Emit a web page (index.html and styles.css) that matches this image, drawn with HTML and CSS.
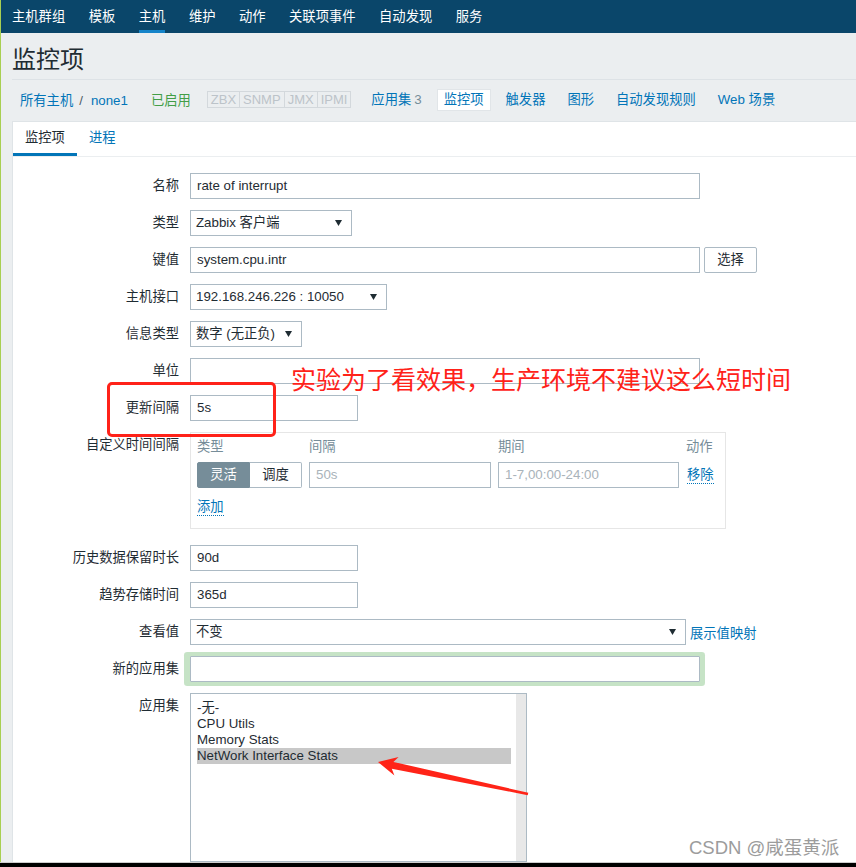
FILE: index.html
```html
<!DOCTYPE html>
<html lang="zh-CN">
<head>
<meta charset="utf-8">
<title>监控项</title>
<link rel="stylesheet" href="styles.css">
</head>
<body>
<div class="screen">
  <div class="app">
    <nav class="topnav">
      <a class="nav-item">主机群组</a>
      <a class="nav-item">模板</a>
      <a class="nav-item active">主机</a>
      <a class="nav-item">维护</a>
      <a class="nav-item">动作</a>
      <a class="nav-item">关联项事件</a>
      <a class="nav-item">自动发现</a>
      <a class="nav-item">服务</a>
    </nav>
    <main class="main">
      <h1 class="title">监控项</h1>
      <div class="crumbs">
        <span class="path"><a class="link">所有主机</a><span class="sep">/</span><a class="link">none1</a></span>
        <span class="status-on">已启用</span>
        <span class="badges"><span class="badge">ZBX</span><span class="badge">SNMP</span><span class="badge">JMX</span><span class="badge">IPMI</span></span>
        <ul class="hostnav">
          <li class="hn-item">应用集<span class="count">3</span></li>
          <li class="hn-item current">监控项</li>
          <li class="hn-item">触发器</li>
          <li class="hn-item">图形</li>
          <li class="hn-item">自动发现规则</li>
          <li class="hn-item">Web 场景</li>
        </ul>
      </div>
      <section class="panel">
        <div class="tabs">
          <span class="tab active">监控项</span>
          <span class="tab">进程</span>
        </div>
        <div class="form">
          <div class="lbl">名称</div>
          <div class="ctl"><div class="input w-wide">rate of interrupt</div></div>

          <div class="lbl">类型</div>
          <div class="ctl"><div class="input select w-type"><span>Zabbix 客户端</span><svg class="caret" width="7" height="6" viewBox="0 0 7 6"><polygon points="0,0 7,0 3.5,6" fill="#1f2c33"/></svg></div></div>

          <div class="lbl">键值</div>
          <div class="ctl"><div class="input w-wide">system.cpu.intr</div><div class="btn">选择</div></div>

          <div class="lbl">主机接口</div>
          <div class="ctl"><div class="input select w-iface"><span>192.168.246.226 : 10050</span><svg class="caret" width="7" height="6" viewBox="0 0 7 6"><polygon points="0,0 7,0 3.5,6" fill="#1f2c33"/></svg></div></div>

          <div class="lbl">信息类型</div>
          <div class="ctl"><div class="input select w-info"><span>数字 (无正负)</span><svg class="caret" width="7" height="6" viewBox="0 0 7 6"><polygon points="0,0 7,0 3.5,6" fill="#1f2c33"/></svg></div></div>

          <div class="lbl">单位</div>
          <div class="ctl"><div class="input w-wide"></div></div>

          <div class="lbl">更新间隔</div>
          <div class="ctl"><div class="input w-small">5s</div></div>

          <div class="lbl">自定义时间间隔</div>
          <div class="ctl">
            <div class="interval-box">
              <div class="iv-grid">
                <div class="iv-head">类型</div>
                <div class="iv-head">间隔</div>
                <div class="iv-head">期间</div>
                <div class="iv-head">动作</div>
                <div class="seg"><span class="seg-btn on">灵活</span><span class="seg-btn">调度</span></div>
                <div class="input placeholder">50s</div>
                <div class="input placeholder">1-7,00:00-24:00</div>
                <div class="iv-act"><a class="dlink">移除</a></div>
              </div>
              <div class="iv-add"><a class="dlink">添加</a></div>
            </div>
          </div>

          <div class="lbl">历史数据保留时长</div>
          <div class="ctl"><div class="input w-small">90d</div></div>

          <div class="lbl">趋势存储时间</div>
          <div class="ctl"><div class="input w-small">365d</div></div>

          <div class="lbl">查看值</div>
          <div class="ctl"><div class="input select w-view"><span>不变</span><svg class="caret" width="7" height="6" viewBox="0 0 7 6"><polygon points="0,0 7,0 3.5,6" fill="#1f2c33"/></svg></div><a class="link valmap">展示值映射</a></div>

          <div class="lbl">新的应用集</div>
          <div class="ctl"><div class="input w-wide focus"></div></div>

          <div class="lbl">应用集</div>
          <div class="ctl">
            <div class="listbox">
              <div class="lb-items">
                <div class="lb-item">-无-</div>
                <div class="lb-item">CPU Utils</div>
                <div class="lb-item">Memory Stats</div>
                <div class="lb-item selected">NetWork Interface Stats</div>
              </div>
              <div class="lb-scroll"></div>
            </div>
          </div>
        </div>
      </section>
    </main>
  </div>
  <div class="taskbar"></div>

  <div class="note-text">实验为了看效果，生产环境不建议这么短时间</div>
  <div class="note-box"></div>
  <svg class="note-arrow" width="165" height="60" viewBox="0 0 165 60">
    <polygon points="8,17 28.6,11.9 23.4,16.9 158.3,47.8 157.7,50.2 21.8,23.7 24.4,30.5" fill="#ff2418"/>
  </svg>
  <div class="watermark">CSDN @咸蛋黄派</div>
</div>
</body>
</html>
```
FILE: styles.css
```css
* { box-sizing: border-box; }
html, body { margin: 0; padding: 0; }
body {
  font-family: "Liberation Sans", "Noto Sans CJK SC", sans-serif;
  font-size: 13.3px;
  color: #1f2c33;
  background: #ebeef0;
}
.screen {
  position: relative;
  width: 856px;
  height: 867px;
  display: flex;
  flex-direction: column;
  overflow: hidden;
}
.app {
  flex: 1;
  min-height: 0;
  display: flex;
  flex-direction: column;
  border-left: 1px solid #a8cf52;
  background: #ebeef0;
  overflow: hidden;
}
.topnav {
  flex: none;
  display: flex;
  gap: 23.5px;
  height: 33px;
  padding-left: 11px;
  background: #0a466a;
}
.nav-item {
  color: #ffffff;
  line-height: 27px;
  padding-top: 3px;
  border-bottom: 3px solid transparent;
  white-space: nowrap;
}
.nav-item.active { border-bottom-color: #1584c9; }

.main {
  flex: 1;
  min-height: 0;
  display: flex;
  flex-direction: column;
  padding-left: 11px;
}
.title {
  margin: 0;
  font-size: 24px;
  font-weight: normal;
  line-height: 32px;
  padding: 11px 0 3px;
  border-bottom: 1px solid #dde2e6;
  color: #1f2c33;
}
.link { color: #0275b8; }
.crumbs {
  flex: none;
  display: flex;
  align-items: center;
  height: 41px;
  padding: 0 0 2px 8px;
  white-space: nowrap;
}
.sep { margin: 0 8px 0 6px; color: #4f5b63; }
.status-on { margin-left: 23px; color: #429e47; }
.badges { display: flex; margin-left: 16px; }
.badge {
  height: 17px;
  line-height: 15px;
  padding: 0 3px;
  font-size: 13px;
  color: #bcc3c9;
  border: 1px solid #d3d8dc;
}
.badge + .badge { margin-left: -1px; }
.hostnav {
  display: flex;
  gap: 8px;
  margin: 0 0 0 13px;
  padding: 0;
  list-style: none;
}
.hn-item {
  height: 22px;
  line-height: 20px;
  padding: 0 6px;
  border: 1px solid transparent;
  color: #0275b8;
}
.hn-item.current { background: #ffffff; border-color: #e1e5e8; }
.count { margin-left: 3px; color: #768d99; }

.panel {
  flex: 1;
  background: #ffffff;
  border-top: 1px solid #dfe4e7;
  border-left: 1px solid #dfe4e7;
}
.tabs {
  display: flex;
  border-bottom: 1px solid #ebeef0;
}
.tab {
  line-height: 31px;
  padding: 0 12px;
  border-bottom: 3px solid transparent;
  color: #0275b8;
}
.tab.active { color: #1f2c33; border-bottom-color: #0275b8; }

.form {
  display: grid;
  grid-template-columns: 166px 1fr;
  column-gap: 11px;
  row-gap: 11px;
  padding-top: 16px;
}
.lbl {
  text-align: right;
  line-height: 26px;
  align-self: start;
  white-space: nowrap;
}
.ctl { display: flex; align-items: center; }
.input {
  height: 26px;
  line-height: 24px;
  padding: 0 6px;
  border: 1px solid #acbac4;
  background: #ffffff;
  color: #1f2c33;
  white-space: nowrap;
}
.w-wide { width: 510px; }
.w-small { width: 168px; }
.w-type { width: 162px; }
.w-iface { width: 197px; }
.w-info { width: 112px; }
.w-view { width: 496px; }
.select {
  display: flex;
  align-items: center;
  justify-content: space-between;
  padding: 0 9px 0 5px;
}
.caret { display: block; }
.btn {
  margin-left: 4px;
  width: 53px;
  height: 26px;
  line-height: 24px;
  text-align: center;
  border: 1px solid #acbac4;
  border-radius: 2px;
  background: #ffffff;
}
.valmap { margin-left: 4px; }
.placeholder { color: #a9b3ba; }
.focus {
  border-radius: 1px;
  box-shadow: -2px 0 0 4px #c6e3c6, 1px 0 0 4px #c6e3c6;
}

.interval-box {
  width: 536px;
  margin-bottom: 5px;
  padding: 5px 6px 12px;
  border: 1px solid #e6e6e6;
}
.iv-grid {
  display: grid;
  grid-template-columns: 105px 182px 181px auto;
  column-gap: 7px;
  row-gap: 6px;
}
.iv-head { line-height: 18px; color: #768d99; }
.seg { display: flex; }
.seg-btn {
  height: 26px;
  line-height: 24px;
  text-align: center;
  border: 1px solid #acbac4;
  background: #ffffff;
}
.seg-btn:first-child { width: 53px; border-radius: 2px 0 0 2px; }
.seg-btn:last-child { width: 52px; border-left: none; border-radius: 0 2px 2px 0; }
.seg-btn.on { background: #768d99; border-color: #768d99; color: #ffffff; }
.iv-act { display: flex; align-items: center; margin-left: 1px; }
.dlink {
  display: inline-block;
  line-height: 16px;
  color: #0275b8;
  border-bottom: 1px dotted #0275b8;
}
.iv-add { margin-top: 11px; height: 17px; }

.listbox {
  display: flex;
  width: 337px;
  height: 169px;
  border: 1px solid #acbac4;
  background: #ffffff;
}
.lb-items { flex: 1; padding: 6px 5px 0 6px; }
.lb-item { line-height: 16px; white-space: nowrap; }
.lb-item.selected { background: #c8c8c8; }
.lb-scroll { width: 10px; background: #e8e8e8; }

.taskbar {
  flex: none;
  height: 5px;
  border-top: 1px solid #cdcdcd;
  background: #000000;
}

.note-text {
  position: absolute;
  left: 291px;
  top: 364px;
  font-family: "Noto Sans CJK SC", sans-serif;
  font-size: 25px;
  line-height: 28px;
  color: #ff2219;
  white-space: nowrap;
}
.note-box {
  position: absolute;
  left: 107px;
  top: 382px;
  width: 169px;
  height: 55px;
  border: 3px solid #ff2219;
  border-radius: 5px;
}
.note-arrow { position: absolute; left: 370px; top: 745px; }
.watermark {
  position: absolute;
  left: 689px;
  top: 838px;
  font-size: 18.5px;
  line-height: 20px;
  color: #9c9c9c;
  white-space: nowrap;
}
```
